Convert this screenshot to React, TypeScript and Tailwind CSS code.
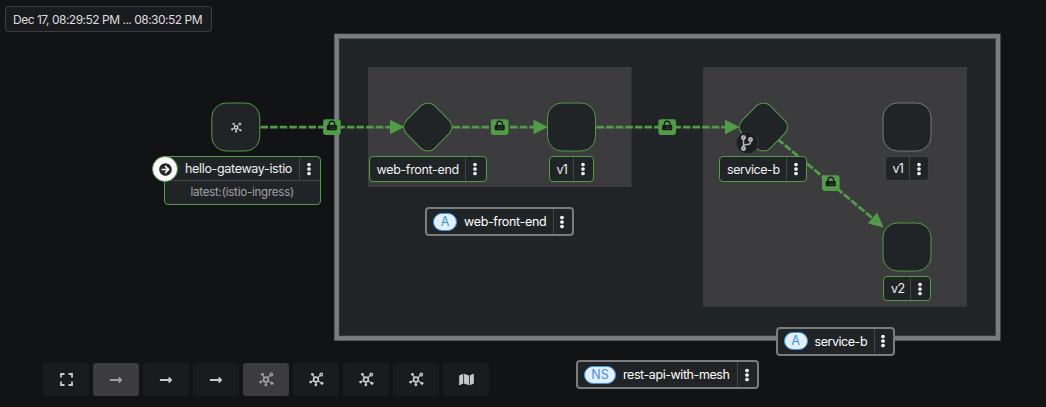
import React from "react";
import { FaArrowCircleRight, FaCodeBranch, FaLongArrowAltRight, FaMap } from "react-icons/fa";

const GREEN = "#529b49";

function TopologyIcon({ className }: { className: string }) {
  return (
    <svg viewBox="0 0 16 16" className={className} fill="none" stroke="currentColor">
      <circle cx="7.4" cy="8" r="2.5" strokeWidth="1.8" />
      <path d="M9.3 6.2 12 3.6M5.8 6 3.9 2.9M5.1 9 2.2 10.4M7.3 10.5V13M9.5 9.4l3.6 2.2" strokeWidth="1.2" />
      <circle cx="13" cy="2.7" r="1.4" strokeWidth="1.4" />
      <g fill="currentColor" stroke="none">
        <circle cx="3.6" cy="2.5" r="1.5" />
        <circle cx="1.7" cy="10.7" r="1.5" />
        <circle cx="7.3" cy="13.8" r="1.5" />
        <circle cx="13.8" cy="12" r="1.6" />
      </g>
    </svg>
  );
}

function ExpandIcon() {
  return (
    <svg viewBox="0 0 13 13" className="h-[13px] w-[13px]" fill="none" stroke="currentColor" strokeWidth="1.8">
      <path d="M1 4.5V1h3.5M8.5 1H12v3.5M12 8.5V12H8.5M4.5 12H1V8.5" />
    </svg>
  );
}

function Kebab() {
  return (
    <svg viewBox="0 0 4 14" className="h-[14px] w-1" fill="currentColor">
      <circle cx="2" cy="2.5" r="1.85" />
      <circle cx="2" cy="7" r="1.85" />
      <circle cx="2" cy="11.5" r="1.85" />
    </svg>
  );
}

function Lock({ x, y }: { x: number; y: number }) {
  return (
    <g transform={`translate(${x} ${y})`}>
      <rect x="-8.8" y="-7.8" width="17.6" height="15.8" rx="2.4" fill={GREEN} />
      <path d="M-2.8-1V-3a2.8 2.8 0 0 1 5.6 0v2" fill="none" stroke="#151515" strokeWidth="1.3" />
      <rect x="-5" y="-2" width="10" height="5.2" rx="0.8" fill="#151515" />
      <path d="M-2.2-.2H3.6M-2.2 1.6H3.6" stroke="#2f5a2c" strokeWidth="0.7" />
    </g>
  );
}

function SquareNode({ x, y, stroke }: { x: number; y: number; stroke: string }) {
  return <rect x={x - 24} y={y - 24} width="48" height="48" rx="14.5" fill="#212427" stroke={stroke} />;
}

function DiamondNode({ x, y }: { x: number; y: number }) {
  return (
    <rect
      x="-19.8"
      y="-19.8"
      width="39.6"
      height="39.6"
      rx="9.5"
      transform={`translate(${x} ${y}) rotate(45)`}
      fill="#212427"
      stroke={GREEN}
    />
  );
}

function Graph() {
  return (
    <svg className="absolute inset-0" width="1046" height="407" viewBox="0 0 1046 407">
      <rect x="336.7" y="36.2" width="661.3" height="302" fill="#212427" stroke="#444548" strokeWidth="5.6" />
      <rect x="336.7" y="36.2" width="661.3" height="302" fill="none" stroke="#7b7c7f" strokeWidth="4.2" />
      <rect x="368" y="67" width="263.5" height="120" fill="#3c3b3d" />
      <rect x="703" y="67" width="264" height="239.7" fill="#3c3b3d" />
      <g stroke={GREEN} strokeWidth="2.8" strokeDasharray="7.6 2" fill="none">
        <path d="M260.5 127.1H392" />
        <path d="M452.5 127.1H535" />
        <path d="M596.5 127.1H727" />
        <path d="M777.5 139 874 219.5" />
      </g>
      <g fill={GREEN}>
        <path d="M390 119.7 404.5 127 390 134.3z" />
        <path d="M533.5 119.7 548 127 533.5 134.3z" />
        <path d="M725 119.7 739.5 127 725 134.3z" />
        <path d="M883.5 227.5 877.2 212.5 867.8 223.6z" />
      </g>
      <SquareNode x={235.8} y={127} stroke={GREEN} />
      <SquareNode x={571.5} y={127} stroke={GREEN} />
      <SquareNode x={907} y={127} stroke="#77787b" />
      <SquareNode x={907} y={247} stroke={GREEN} />
      <DiamondNode x={427.8} y={127} />
      <DiamondNode x={763.4} y={127} />
      <Lock x={331.9} y={127} />
      <Lock x={499.7} y={127} />
      <Lock x={667.2} y={127} />
      <Lock x={830.8} y={183} />
      <circle cx="747.4" cy="142.7" r="11" fill="#1b1d21" stroke="#3c3b3d" strokeWidth="0.8" />
    </svg>
  );
}

type LabelProps = { box: string; menu: string; text: string; tracking: string; badge?: string; pill?: string };

function NodeLabel({ box, menu, text, tracking, badge, pill }: LabelProps) {
  return (
    <div className={`absolute flex items-stretch rounded bg-[#212427] text-[12.5px] leading-none text-[#f0f0f0] ${box}`}>
      <div className="flex flex-1 items-center whitespace-nowrap">
        {badge && (
          <span className={`mr-[7px] flex h-[18px] items-center justify-center rounded-full border border-[#3a97f0] bg-[#e3f0fb] pt-px text-[#3f93e8] ${pill}`}>
            {badge}
          </span>
        )}
        <span className={`pt-[2px] ${tracking}`}>{text}</span>
      </div>
      <div className={`flex items-center justify-center border-l border-[#444548] ${menu}`}>
        <Kebab />
      </div>
    </div>
  );
}

function ToolButton({ active, children }: { active?: boolean; children: React.ReactNode }) {
  return (
    <button
      className={`flex h-[33px] w-[46px] items-center justify-center rounded-[3px] ${
        active ? "bg-[#3c3b3d] text-[#a0a0a0]" : "bg-[#1a1b1f] text-[#c9c9c9]"
      }`}
    >
      {children}
    </button>
  );
}

export default function App() {
  return (
    <main className="relative flex h-[407px] w-[1046px] flex-col justify-between overflow-hidden bg-[#121315] font-['Inter',sans-serif]">
      <Graph />

      <div className="relative mt-1.5 ml-[5px] flex h-[26px] w-[207px] items-center rounded-[3px] border border-[#3c3d40] bg-[#1a1b1f] pl-[7px] text-[12px] leading-none whitespace-nowrap text-[#dedede]">
        <span className="pt-px tracking-[-0.5px]">Dec 17, 08:29:52 PM ... 08:30:52 PM</span>
      </div>

      <TopologyIcon className="absolute top-[121.5px] left-[230.5px] h-[11px] w-[11px] text-[#dedede]" />
      <FaCodeBranch className="absolute top-[135px] left-[740px] h-4 w-[14px] text-[#b5b5b5]" />

      <div className="absolute top-[156px] left-[164px] flex h-[49px] w-[156.5px] flex-col rounded border border-[#529b49] bg-[#212427] leading-none">
        <div className="flex h-6 border-b border-[#444548] text-[12.5px] text-[#f0f0f0]">
          <span className="flex flex-1 items-center pt-[2px] pl-5 tracking-[-0.33px] whitespace-nowrap">hello-gateway-istio</span>
          <span className="flex w-[21px] items-center justify-center border-l border-[#444548] pr-px">
            <Kebab />
          </span>
        </div>
        <div className="flex flex-1 items-center pl-[25.5px] text-[11.5px] whitespace-nowrap text-[#a3a3a3]">
          <span className="pt-px tracking-[-0.22px]">latest:(istio-ingress)</span>
        </div>
      </div>
      <div className="absolute top-[156px] left-[152px] flex h-[26px] w-[26px] items-center justify-center rounded-full border border-[#529b49] bg-white text-[#292929]">
        <FaArrowCircleRight className="h-[13px] w-[13px]" />
      </div>

      <NodeLabel box="left-[369px] top-[156px] h-[26px] w-[118px] border border-[#529b49] pl-[6.5px]" menu="w-[21px] pr-[1.5px]" text="web-front-end" tracking="tracking-[-0.33px]" />
      <NodeLabel box="left-[549px] top-[156px] h-[26px] w-[45px] border border-[#529b49] pl-[6.5px]" menu="w-[20px] pr-px" text="v1" tracking="tracking-[-0.8px]" />
      <NodeLabel box="left-[719px] top-[156px] h-[26px] w-[88px] border border-[#529b49] pl-[7px]" menu="w-[20px] pr-px" text="service-b" tracking="tracking-[-0.45px]" />
      <NodeLabel box="left-[885px] top-[156px] h-[25px] w-[44px] border border-[#3f4144] pl-[6.5px]" menu="w-[19px] pr-px" text="v1" tracking="tracking-[-0.8px]" />
      <NodeLabel box="left-[883px] top-[276px] h-[25px] w-[48px] border border-[#529b49] pl-[7px]" menu="w-[20px] pr-px" text="v2" tracking="tracking-[-0.6px]" />

      <NodeLabel box="left-[425px] top-[207px] h-[29px] w-[149px] border-2 border-[#7b7c7f] pl-[6px]" menu="w-[19px] pr-[1.5px] text-white" text="web-front-end" tracking="tracking-[-0.33px] text-white" badge="A" pill="w-6" />
      <NodeLabel box="left-[775.5px] top-[326.5px] h-[29px] w-[119px] border-2 border-[#7b7c7f] pl-[6px]" menu="w-[19px] pr-px text-white" text="service-b" tracking="tracking-[-0.45px] text-white" badge="A" pill="w-6" />
      <NodeLabel box="left-[576px] top-[360px] h-[29px] w-[183px] border-2 border-[#7b7c7f] pl-[6px]" menu="w-[20px] pr-px text-white" text="rest-api-with-mesh" tracking="tracking-[-0.43px] text-white" badge="NS" pill="w-8" />

      <nav className="relative mb-[11px] ml-[43px] flex w-fit gap-1">
        <ToolButton><ExpandIcon /></ToolButton>
        <ToolButton active><FaLongArrowAltRight className="h-[14px] w-[14px]" /></ToolButton>
        <ToolButton><FaLongArrowAltRight className="h-[14px] w-[14px]" /></ToolButton>
        <ToolButton><FaLongArrowAltRight className="h-[14px] w-[14px]" /></ToolButton>
        <ToolButton active><TopologyIcon className="h-[15px] w-[15px]" /></ToolButton>
        <ToolButton><TopologyIcon className="h-[15px] w-[15px]" /></ToolButton>
        <ToolButton><TopologyIcon className="h-[15px] w-[15px]" /></ToolButton>
        <ToolButton><TopologyIcon className="h-[15px] w-[15px]" /></ToolButton>
        <ToolButton><FaMap className="h-[13px] w-[15px]" /></ToolButton>
      </nav>
    </main>
  );
}
